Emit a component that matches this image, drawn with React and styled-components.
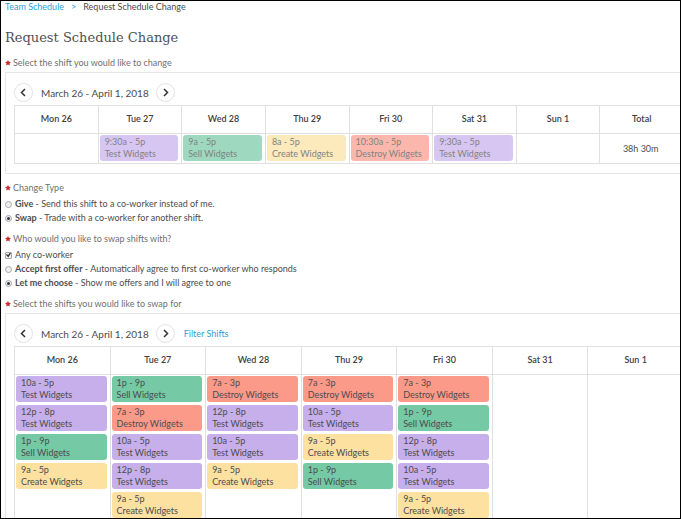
import React from "react";
import styled, { createGlobalStyle } from "styled-components";

const GlobalStyle = createGlobalStyle`
  *, *::before, *::after { box-sizing: border-box; }
  body { margin: 0; background: #fff; }
`;

const tones = {
  test: "#c7afec",
  sell: "#76c9a5",
  create: "#fce1a1",
  destroy: "#fc9a8a",
};

const names = {
  test: "Test Widgets",
  sell: "Sell Widgets",
  create: "Create Widgets",
  destroy: "Destroy Widgets",
};

const Page = styled.main`
  height: 100vh;
  overflow: hidden;
  border: 1px solid #000;
  padding: 0 0 0 4px;
  background: #fff;
  color: #4c4c4c;
  font-family: Lato, "Open Sans", sans-serif;
  font-size: 9px;
  line-height: 12px;
`;

const Breadcrumb = styled.nav`
  display: flex;
  gap: 7px;
`;

const Link = styled.a`
  color: #2d9fd8;
  text-decoration: none;
`;

const Title = styled.h1`
  margin: 15px 0 9px;
  color: #505050;
  font: 400 13px/20px "DejaVu Serif", serif;
`;

const Section = styled.fieldset`
  min-width: 0;
  margin: 0 0 ${(p) => p.$after}px;
  padding: 0;
  border: 0;
`;

const Legend = styled.legend`
  display: flex;
  gap: 2px;
  padding: 0;
  margin-bottom: 3px;
  color: #707070;
`;

const Star = styled.svg`
  width: 6px;
  height: 12px;
  fill: #c9252b;
`;

const Panel = styled.div`
  margin-right: -4px;
  padding: 10px 0 9px 8px;
  border: 1px solid #e6e6e6;
  border-right: 0;
`;

const WeekBar = styled.div`
  display: flex;
  align-items: center;
  margin-bottom: 3px;
`;

const Week = styled.span`
  margin: 0 7px 0 8px;
  font-size: 10px;
`;

const RoundButton = styled.button`
  display: grid;
  place-items: center;
  width: 19px;
  height: 19px;
  padding: 0;
  border: 1px solid #e2e2e6;
  border-radius: 50%;
  background: #fff;
  color: #333;

  svg {
    width: 7px;
    height: 9px;
    fill: none;
    stroke: currentColor;
    stroke-width: 1.5;
  }
`;

const FilterLink = styled(Link)`
  margin-left: 9px;
`;

const Grid = styled.table`
  width: 100%;
  table-layout: fixed;
  border-collapse: collapse;
`;

const DayHead = styled.th`
  height: 28px;
  padding: 0 0 2px;
  border: 1px solid #e0e0e0;
  color: #404040;
  font-weight: 600;
  text-align: center;
`;

const Cell = styled.td`
  height: 30px;
  padding: 1px 3px 1px 1px;
  border: 1px solid #e0e0e0;
  text-align: ${(p) => (p.$center ? "center" : "left")};
  vertical-align: ${(p) => (p.$center ? "middle" : "top")};
`;

const Stack = styled.div`
  display: grid;
  gap: 3px;
`;

const Shift = styled.button`
  display: block;
  width: 100%;
  height: 26px;
  padding: 1px 5px;
  border: 0;
  border-radius: 3px;
  background: ${(p) => tones[p.$kind]};
  color: #4c4c4c;
  font: inherit;
  text-align: left;
  white-space: nowrap;
  opacity: ${(p) => (p.$faded ? 0.7 : 1)};

  span { display: block; }
`;

const Option = styled.label`
  display: flex;
  align-items: center;
  gap: 3px;
  height: 14px;
`;

const Mark = styled.input`
  appearance: none;
  display: grid;
  place-items: center;
  width: 7px;
  height: 7px;
  margin: 0;
  border: 1px solid #a6a6a6;
  border-radius: ${(p) => (p.type === "radio" ? "50%" : "1px")};
  background: #f0f0f0;

  &:checked::before {
    content: "";
    width: ${(p) => (p.type === "radio" ? 3 : 5)}px;
    height: ${(p) => (p.type === "radio" ? 3 : 5)}px;
    border-radius: ${(p) => (p.type === "radio" ? "50%" : "0")};
    background: #333;
    clip-path: ${(p) =>
      p.type === "radio"
        ? "none"
        : "polygon(0 45%, 20% 30%, 40% 55%, 80% 0, 100% 15%, 45% 100%)"};
  }
`;

function Required({ children }) {
  return (
    <Legend>
      <Star viewBox="0 0 12 24" aria-label="required">
        <path d="M6 6l1.800 3.700 4.200.4-3.200 2.800 1 4.300L6 15l-3.800 2.200 1-4.300L0 10.100l4.200-.4z" />
      </Star>
      {children}
    </Legend>
  );
}

function Choice({ type = "radio", name, title, text, checked }) {
  return (
    <Option>
      <Mark type={type} name={name} defaultChecked={checked} />
      <span>
        {title && <b>{title}</b>}
        {title && " - "}
        {text}
      </span>
    </Option>
  );
}

function WeekPicker({ children }) {
  return (
    <WeekBar>
      <RoundButton type="button" aria-label="Previous week">
        <svg viewBox="0 0 7 9"><path d="M5 1L1.500 4.500 5 8" /></svg>
      </RoundButton>
      <Week>March 26 - April 1, 2018</Week>
      <RoundButton type="button" aria-label="Next week">
        <svg viewBox="0 0 7 9"><path d="M2 1l3.500 3.500L2 8" /></svg>
      </RoundButton>
      {children}
    </WeekBar>
  );
}

function Schedule({ days, total, faded }) {
  return (
    <Grid>
      <thead>
        <tr>
          {days.map(([day]) => <DayHead key={day} scope="col">{day}</DayHead>)}
          {total && <DayHead scope="col">Total</DayHead>}
        </tr>
      </thead>
      <tbody>
        <tr>
          {days.map(([day, ...shifts]) => (
            <Cell key={day}>
              <Stack>
                {shifts.map(([time, kind]) => (
                  <Shift key={time} type="button" $kind={kind} $faded={faded}>
                    <span>{time}</span>
                    <span>{names[kind]}</span>
                  </Shift>
                ))}
              </Stack>
            </Cell>
          ))}
          {total && <Cell $center>{total}</Cell>}
        </tr>
      </tbody>
    </Grid>
  );
}

const myWeek = [
  ["Mon 26"],
  ["Tue 27", ["9:30a - 5p", "test"]],
  ["Wed 28", ["9a - 5p", "sell"]],
  ["Thu 29", ["8a - 5p", "create"]],
  ["Fri 30", ["10:30a - 5p", "destroy"]],
  ["Sat 31", ["9:30a - 5p", "test"]],
  ["Sun 1"],
];

const openWeek = [
  ["Mon 26", ["10a - 5p", "test"], ["12p - 8p", "test"], ["1p - 9p", "sell"], ["9a - 5p", "create"]],
  ["Tue 27", ["1p - 9p", "sell"], ["7a - 3p", "destroy"], ["10a - 5p", "test"], ["12p - 8p", "test"], ["9a - 5p", "create"]],
  ["Wed 28", ["7a - 3p", "destroy"], ["12p - 8p", "test"], ["10a - 5p", "test"], ["9a - 5p", "create"]],
  ["Thu 29", ["7a - 3p", "destroy"], ["10a - 5p", "test"], ["9a - 5p", "create"], ["1p - 9p", "sell"]],
  ["Fri 30", ["7a - 3p", "destroy"], ["1p - 9p", "sell"], ["12p - 8p", "test"], ["10a - 5p", "test"], ["9a - 5p", "create"]],
  ["Sat 31"],
  ["Sun 1"],
];

export default function App() {
  return (
    <Page>
      <GlobalStyle />
      <Breadcrumb aria-label="Breadcrumb">
        <Link href="#team">Team Schedule</Link>
        <Link as="span">&gt;</Link>
        <span>Request Schedule Change</span>
      </Breadcrumb>
      <Title>Request Schedule Change</Title>

      <Section $after={8}>
        <Required>Select the shift you would like to change</Required>
        <Panel>
          <WeekPicker />
          <Schedule days={myWeek} total="38h 30m" faded />
        </Panel>
      </Section>

      <Section $after={8}>
        <Required>Change Type</Required>
        <Choice name="change" title="Give" text="Send this shift to a co-worker instead of me." />
        <Choice name="change" title="Swap" text="Trade with a co-worker for another shift." checked />
      </Section>

      <Section $after={8}>
        <Required>Who would you like to swap shifts with?</Required>
        <Choice type="checkbox" name="anyone" text="Any co-worker" checked />
        <Choice name="accept" title="Accept first offer" text="Automatically agree to first co-worker who responds" />
        <Choice name="accept" title="Let me choose" text="Show me offers and I will agree to one" checked />
      </Section>

      <Section $after={0}>
        <Required>Select the shifts you would like to swap for</Required>
        <Panel>
          <WeekPicker>
            <FilterLink href="#filter">Filter Shifts</FilterLink>
          </WeekPicker>
          <Schedule days={openWeek} />
        </Panel>
      </Section>
    </Page>
  );
}
